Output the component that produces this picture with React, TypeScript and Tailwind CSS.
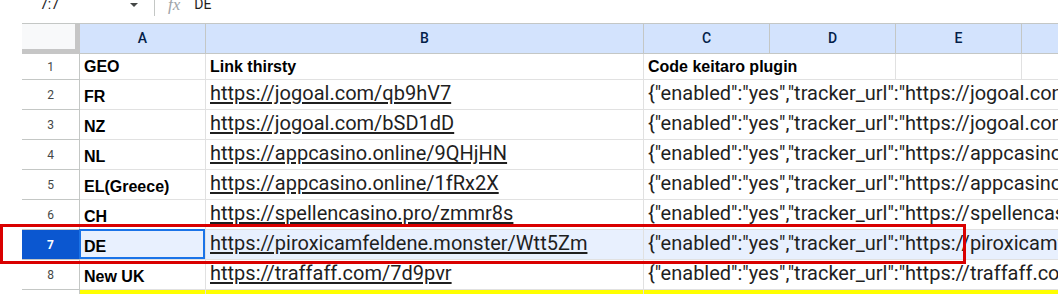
import React from 'react';

const rows = [
  { n: 2, geo: 'FR', link: 'https://jogoal.com/qb9hV7' },
  { n: 3, geo: 'NZ', link: 'https://jogoal.com/bSD1dD' },
  { n: 4, geo: 'NL', link: 'https://appcasino.online/9QHjHN' },
  { n: 5, geo: 'EL(Greece)', link: 'https://appcasino.online/1fRx2X' },
  { n: 6, geo: 'CH', link: 'https://spellencasino.pro/zmmr8s' },
  { n: 7, geo: 'DE', link: 'https://piroxicamfeldene.monster/Wtt5Zm' },
  { n: 8, geo: 'New UK', link: 'https://traffaff.com/7d9pvr' },
];

const cols = [
  { l: 'A', w: 'w-[126px]' },
  { l: 'B', w: 'w-[438px]' },
  { l: 'C', w: 'w-[126px]' },
  { l: 'D', w: 'w-[126px]' },
  { l: 'E', w: 'w-[126px]' },
  { l: 'F', w: 'w-[126px]' },
];

const roboto = { fontFamily: 'Roboto, "Liberation Sans", sans-serif' };
const arial = { fontFamily: '"Liberation Sans", Arial, sans-serif' };

const FormulaBar = () => (
  <div className="flex h-[23px] items-start overflow-hidden" style={roboto}>
    <div className="ml-[40px] mt-[-3px] w-[90px] text-[14px] leading-[14px] text-[#1f1f1f]">7:7</div>
    <svg width="8" height="4" viewBox="0 0 8 4" className="mt-[3px]">
      <path d="M0 0 L8 0 L4 4 Z" fill="#444746" />
    </svg>
    <div className="ml-[16px] h-[16px] w-px bg-[#c4c7c5]" />
    <div
      className="ml-[13px] mt-[-4px] text-[17px] italic leading-[17px] text-[#a0a4a8]"
      style={{ fontFamily: '"Liberation Serif", serif' }}
    >
      fx
    </div>
    <div className="ml-[14px] mt-[-3px] text-[14px] leading-[14px] text-[#1f1f1f]">DE</div>
  </div>
);

const ColumnHeaders = () => (
  <div className="flex h-[31px] border-t border-[#c4c7c5]">
    <div className="w-[22px] shrink-0 border-t border-white -mt-px" />
    <div className="flex w-[58px] shrink-0 flex-col bg-[#f8f9fa]">
      <div className="flex flex-1">
        <div className="flex-1" />
        <div className="w-[5px] bg-[#c6c6c6]" />
      </div>
      <div className="h-[5px] bg-[#c6c6c6]" />
    </div>
    {cols.map(c => (
      <div
        key={c.l}
        className={`${c.w} flex shrink-0 items-center justify-center border-r border-b border-[#c4c7c5] bg-[#d3e3fd] text-[14px] font-medium text-[#041e49]`}
        style={roboto}
      >
        {c.l}
      </div>
    ))}
  </div>
);

const TitleRow = () => (
  <div className="flex h-[26px]">
    <div className="w-[22px] shrink-0" />
    <div className="flex w-[58px] shrink-0 items-center justify-center border-r border-b border-[#c4c7c5] text-[12px] text-[#444746]" style={roboto}>
      1
    </div>
    <div className="flex w-[126px] shrink-0 items-end border-r border-b border-[#e1e1e1] pb-[3px] pl-[4px] text-[16px] font-bold leading-[18px] text-black" style={arial}>
      GEO
    </div>
    <div className="flex w-[438px] shrink-0 items-end border-r border-b border-[#e1e1e1] pb-[3px] pl-[4px] text-[16px] font-bold leading-[18px] text-black" style={arial}>
      Link thirsty
    </div>
    <div className="flex w-[252px] shrink-0 items-end whitespace-nowrap border-r border-b border-[#e1e1e1] pb-[3px] pl-[4px] text-[16px] font-bold leading-[18px] text-black" style={arial}>
      Code keitaro plugin
    </div>
    <div className="w-[126px] shrink-0 border-r border-b border-[#e1e1e1]" />
    <div className="w-[126px] shrink-0 border-b border-[#e1e1e1]" />
  </div>
);

const DataRow = ({ n, geo, link }: { n: number; geo: string; link: string }) => {
  const active = n === 7;
  return (
    <div className={`flex h-[30px] ${active ? 'bg-[#e8f0fe]' : ''}`}>
      <div className="w-[22px] shrink-0 bg-white" />
      <div
        className={`flex w-[58px] shrink-0 items-center justify-center border-r border-b border-[#c4c7c5] text-[12px] ${
          active ? 'bg-[#0b57d0] font-bold text-white' : 'bg-white text-[#444746]'
        }`}
        style={roboto}
      >
        {n}
      </div>
      <div className="relative flex w-[126px] shrink-0 items-end border-r border-b border-[#e1e1e1] pb-[3px] pl-[4px] text-[16px] font-bold leading-[18px] text-black" style={arial}>
        {geo}
        {active && <div className="absolute -left-px -top-px right-0 bottom-0 border-2 border-[#1a73e8]" />}
      </div>
      <div className="flex w-[438px] shrink-0 items-end border-r border-b border-[#e1e1e1] pb-[4px] pl-[4px] text-[20px] leading-[23px] text-[#1f1f1f]" style={roboto}>
        <span className="underline decoration-[1.5px] underline-offset-[2px]">{link}</span>
      </div>
      <div className="flex min-w-0 flex-1 items-end overflow-hidden whitespace-nowrap border-b border-[#e1e1e1] pb-[4px] pl-[4px] text-[20px] leading-[23px] text-[#1f1f1f]" style={roboto}>
        {`{"enabled":"yes","tracker_url":"${link}","token":"a8f3c1d9","key":"${geo.toLowerCase()}"}`}
      </div>
    </div>
  );
};

const YellowRow = () => (
  <div className="flex h-[20px]">
    <div className="w-[22px] shrink-0" />
    <div className="w-[58px] shrink-0 border-r border-[#c4c7c5]" />
    <div className="w-[126px] shrink-0 border-r border-[#e1e1e1] bg-[#ffff00]" />
    <div className="w-[438px] shrink-0 border-r border-[#e1e1e1] bg-[#ffff00]" />
    <div className="flex-1 bg-[#ffff00]" />
  </div>
);

export default function App() {
  return (
    <div className="relative h-[294px] w-[1058px] overflow-hidden bg-white">
      <FormulaBar />
      <ColumnHeaders />
      <TitleRow />
      {rows.map(r => (
        <DataRow key={r.n} {...r} />
      ))}
      <YellowRow />
      <div className="pointer-events-none absolute left-0 top-[224px] h-[40px] w-[966px] border-[3px] border-[#d90000]" />
    </div>
  );
}
